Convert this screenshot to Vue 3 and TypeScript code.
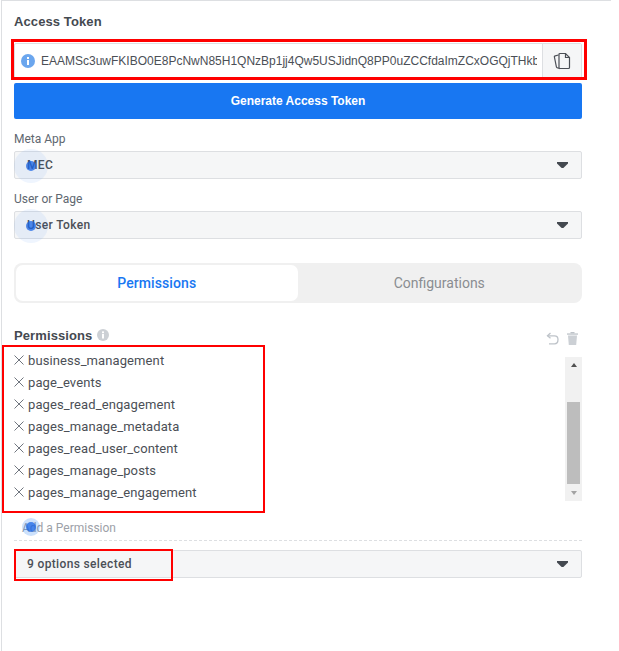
<script setup lang="ts">
const permissions: string[] = [
  'business_management',
  'page_events',
  'pages_read_engagement',
  'pages_manage_metadata',
  'pages_read_user_content',
  'pages_manage_posts',
  'pages_manage_engagement',
]
</script>

<template>
  <div class="page">
    <section class="panel">
      <h2 class="title">Access Token</h2>
      <div class="token">
        <svg class="info" width="14" height="14" viewBox="0 0 14 14">
          <circle cx="7" cy="7" r="7" fill="#6ba6ee" />
          <rect x="6" y="6" width="2" height="5" fill="#fff" />
          <rect x="6" y="3" width="2" height="2" fill="#fff" />
        </svg>
        <span class="token-text">EAAMSc3uwFKIBO0E8PcNwN85H1QNzBp1jj4Qw5USJidnQ8PP0uZCCfdaImZCxOGQjTHkbZAZ</span>
        <span class="copy">
          <svg width="18" height="18" viewBox="0 0 18 18" fill="none" stroke="#4b4f56" stroke-width="1.2">
            <path d="M5.5 3 L2.2 3.8 Q1.2 4 1.4 5 L3.4 14.8 Q3.6 15.8 4.6 15.8 L7 16.6" />
            <path d="M6 2.5 Q6 1.5 7 1.5 H12.5 L16.5 5.5 V15.5 Q16.5 16.5 15.5 16.5 H7 Q6 16.5 6 15.5 Z" fill="#f5f6f7" />
            <path d="M12.5 1.5 V5.5 H16.5" />
          </svg>
        </span>
      </div>
      <button class="generate">Generate Access Token</button>

      <label class="label first">Meta App</label>
      <div class="select">
        <span class="select-text">MEC</span>
        <i class="caret"></i>
        <span class="ripple"><span class="dot"></span></span>
      </div>

      <label class="label">User or Page</label>
      <div class="select">
        <span class="select-text">User Token</span>
        <i class="caret"></i>
        <span class="ripple"><span class="dot"></span></span>
      </div>

      <div class="tabs">
        <div class="tab active">Permissions</div>
        <div class="tab">Configurations</div>
      </div>

      <div class="perm-head">
        <span class="perm-title">Permissions</span>
        <svg class="perm-info" width="12" height="12" viewBox="0 0 12 12">
          <circle cx="6" cy="6" r="6" fill="#ccd0d5" />
          <rect x="5" y="5" width="2" height="4.5" fill="#fff" />
          <rect x="5" y="2.4" width="2" height="1.8" fill="#fff" />
        </svg>
        <span class="spacer"></span>
        <svg class="undo" width="13" height="13" viewBox="0 0 13 13" fill="none" stroke="#bec3c9" stroke-width="1.3">
          <path d="M4.5 1 L1.5 3.8 L4.5 6.2" />
          <path d="M1.5 3.8 H8.5 Q12 3.8 12 7.6 Q12 11.8 8.5 11.8 H3" />
        </svg>
        <svg class="trash" width="11" height="13" viewBox="0 0 11 13">
          <rect x="0" y="1.4" width="11" height="1.3" fill="#bec3c9" />
          <rect x="3.5" y="0" width="4" height="1.4" fill="#bec3c9" />
          <path d="M1 3.4 H10 L9.2 13 H1.8 Z" fill="#ccd0d5" />
        </svg>
      </div>

      <div class="list-wrap">
        <ul class="list">
          <li v-for="p in permissions" :key="p" class="item">
            <svg width="10" height="10" viewBox="0 0 10 10" stroke="#606770" stroke-width="0.9" fill="none">
              <path d="M0.5 0.5 L9.5 9.5 M9.5 0.5 L0.5 9.5" />
            </svg>
            <span>{{ p }}</span>
          </li>
        </ul>
        <div class="scrollbar">
          <i class="arrow up"></i>
          <div class="track"><div class="thumb"></div></div>
          <i class="arrow down"></i>
        </div>
      </div>

      <div class="add">
        <span class="add-text">Add a Permission</span>
        <span class="ripple small"><span class="dot"></span></span>
      </div>

      <div class="select last">
        <span class="select-text">9 options selected</span>
        <i class="caret"></i>
      </div>

      <div class="mark mark-token"></div>
      <div class="mark mark-list"></div>
      <div class="mark mark-options"></div>
    </section>
  </div>
</template>

<style>
html, body { background: #fff; }
</style>

<style scoped>
.page {
  width: 619px;
  height: 651px;
  overflow: hidden;
  background: #fff;
  font-family: Roboto, "Liberation Sans", sans-serif;
  color: #4b4f56;
}
.panel {
  position: relative;
  box-sizing: border-box;
  width: 610px;
  height: 652px;
  margin-left: 1px;
  padding: 14px 29px 0 12px;
  border-top: 1px solid #dddfe2;
  border-left: 1px solid #dddfe2;
}
.title {
  margin: 0;
  font: bold 13px/14px "Liberation Sans", sans-serif;
  letter-spacing: 0.1px;
  color: #444950;
}
.token {
  display: flex;
  align-items: center;
  height: 36px;
  margin-top: 14px;
  box-sizing: border-box;
  border: 1px solid #dddfe2;
  border-radius: 2px;
  padding-left: 6px;
}
.info { flex: none; }
.token-text {
  flex: 1;
  min-width: 0;
  overflow: hidden;
  white-space: nowrap;
  margin: 0 5px 0 6px;
  font: 12px/16px "Liberation Sans", sans-serif;
  color: #4b4f56;
}
.copy {
  flex: none;
  display: flex;
  align-items: center;
  justify-content: center;
  width: 38px;
  height: 100%;
  background: #f5f6f7;
  border-left: 1px solid #dddfe2;
}
.generate {
  display: block;
  width: 100%;
  height: 36px;
  margin-top: 4px;
  border: 0;
  border-radius: 2px;
  background: #1877f2;
  color: #fff;
  font: bold 12px/16px "Liberation Sans", sans-serif;
}
.label {
  display: block;
  font-size: 12px;
  line-height: 14px;
  margin-top: 13px;
  margin-bottom: 5px;
  color: #606770;
}
.select {
  position: relative;
  display: flex;
  align-items: center;
  justify-content: space-between;
  box-sizing: border-box;
  height: 28px;
  padding: 0 12px;
  background: #f5f6f7;
  border: 1px solid #dddfe2;
  border-radius: 2px;
}
.select-text {
  font-size: 12px;
  font-weight: 500;
  letter-spacing: 0.35px;
  color: #4b4f56;
}
.caret {
  display: block;
  width: 11px;
  height: 6px;
  margin-right: 1px;
  background: #444950;
  clip-path: polygon(0 0, 100% 0, 100% 25%, 58% 100%, 42% 100%, 0 25%);
}
.ripple {
  position: absolute;
  left: -1px;
  top: -3px;
  display: flex;
  align-items: center;
  justify-content: center;
  width: 34px;
  height: 34px;
  border-radius: 50%;
  background: rgba(24, 119, 242, 0.07);
}
.dot {
  display: block;
  width: 10px;
  height: 10px;
  border-radius: 50%;
  background: rgba(24, 100, 230, 0.75);
}
.tabs {
  display: flex;
  height: 40px;
  margin-top: 24px;
  box-sizing: border-box;
  padding: 2px;
  background: #f0f0f0;
  border-radius: 8px;
}
.tab {
  flex: 1;
  display: flex;
  align-items: center;
  justify-content: center;
  font-size: 14px;
  color: #8a8d91;
}
.tab.active {
  background: #fff;
  border-radius: 7px;
  font-weight: 500;
  letter-spacing: 0.1px;
  color: #1877f2;
  margin-right: 1px;
}
.perm-head {
  display: flex;
  align-items: center;
  height: 16px;
  margin-top: 25px;
}
.perm-title {
  font: bold 13px/16px "Liberation Sans", sans-serif;
  letter-spacing: 0.1px;
  color: #444950;
}
.perm-info { margin-left: 5px; margin-bottom: 2px; }
.spacer { flex: 1; }
.undo { margin-top: 5px; }
.trash { margin: 5px 4px 0 8px; }
.list-wrap {
  position: relative;
  height: 164px;
  margin-top: 5px;
}
.list {
  margin: 0;
  padding: 0;
  list-style: none;
}
.item {
  display: flex;
  align-items: center;
  gap: 4px;
  height: 22px;
  font-size: 13px;
  letter-spacing: 0.1px;
  color: #4b4f56;
}
.scrollbar {
  position: absolute;
  right: 0;
  top: 8px;
  display: flex;
  flex-direction: column;
  align-items: center;
  width: 17px;
  height: 144px;
  background: #f1f1f1;
}
.track {
  flex: 1;
  width: 13px;
  margin-top: 35px;
}
.thumb {
  width: 100%;
  height: 82px;
  background: #bdbdbd;
}
.arrow {
  display: block;
  width: 0;
  height: 0;
  border-left: 3.5px solid transparent;
  border-right: 3.5px solid transparent;
}
.arrow.up {
  margin-top: 6px;
  border-bottom: 4px solid #505050;
}
.arrow.down {
  margin-bottom: 6px;
  margin-top: 5px;
  border-top: 4px solid #a3a3a3;
}
.add {
  position: relative;
  height: 25px;
  box-sizing: border-box;
  padding-left: 8px;
  margin-top: 3px;
  border-bottom: 1px dashed #dddfe2;
}
.add-text {
  font-size: 12px;
  line-height: 24px;
  color: #9da1a8;
}
.ripple.small {
  left: 8px;
  top: 2px;
  width: 18px;
  height: 18px;
  background: rgba(24, 119, 242, 0.22);
}
.select.last { margin-top: 9px; }
.mark {
  position: absolute;
  box-sizing: border-box;
  border: 2px solid #f00;
  pointer-events: none;
}
.mark-token { left: 9px; top: 38px; width: 576px; height: 41px; border-width: 3px; }
.mark-list { left: 0; top: 344px; width: 263px; height: 168px; }
.mark-options { left: 12px; top: 548px; width: 159px; height: 32px; }
</style>
